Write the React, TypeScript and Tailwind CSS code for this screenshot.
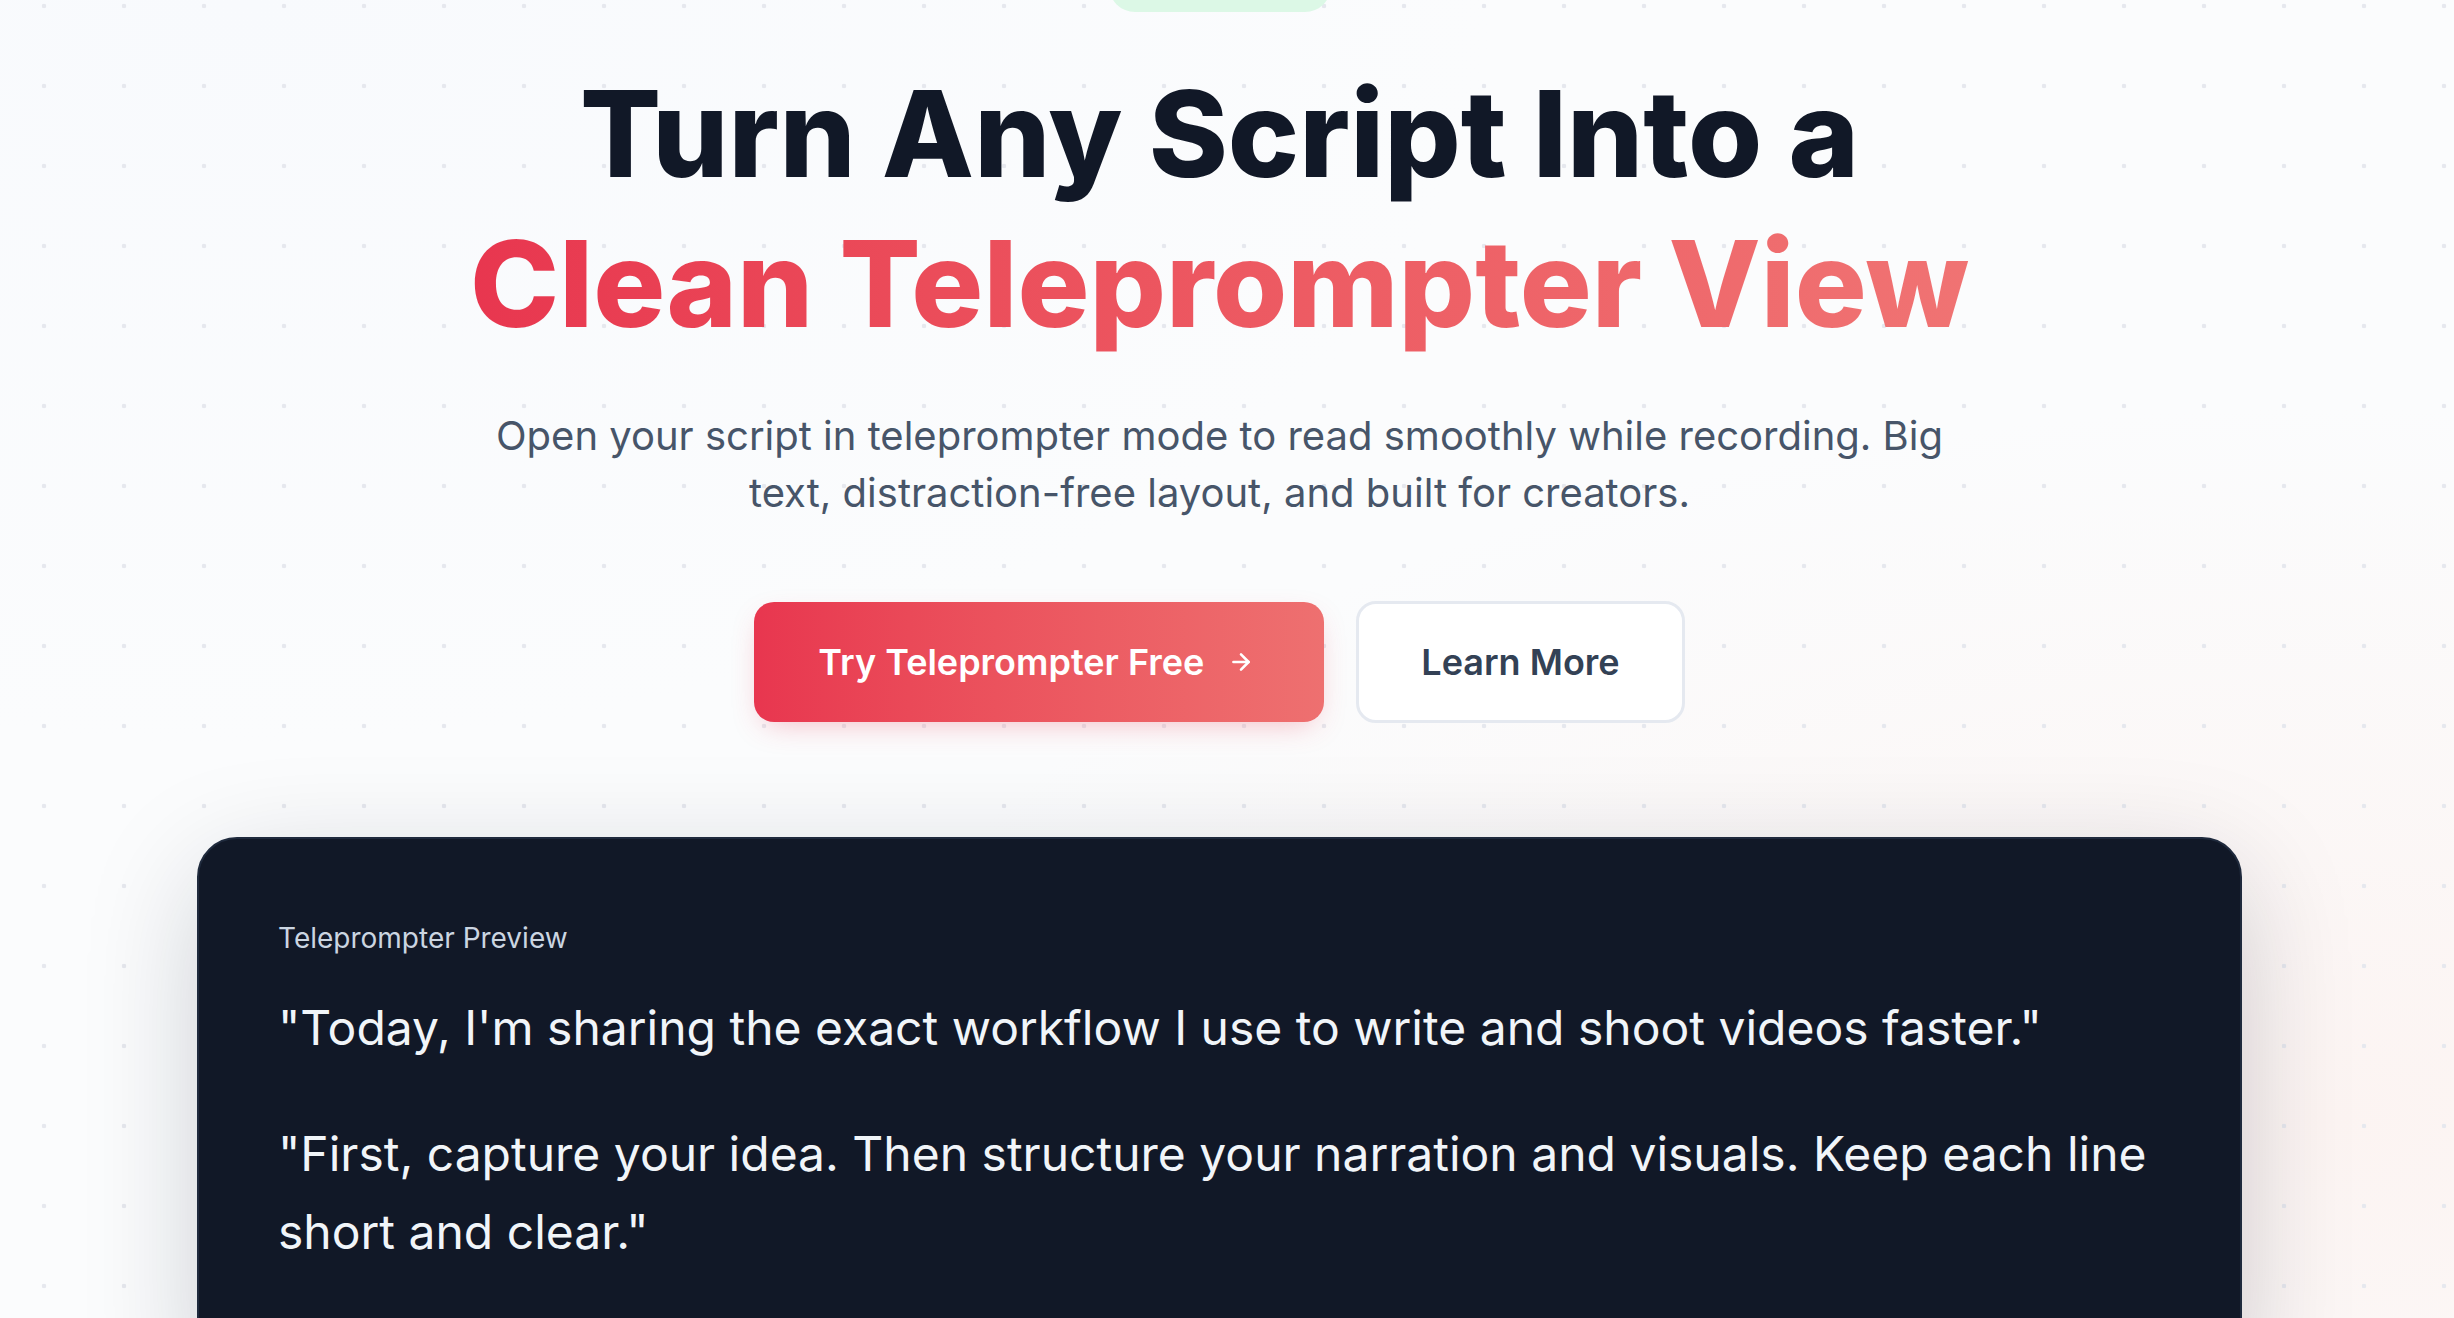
import React from "react";

function ArrowRight() {
  return (
    <svg width="26" height="26" viewBox="0 0 24 24" fill="none" stroke="currentColor" strokeWidth="2.4" strokeLinecap="round" strokeLinejoin="round">
      <path d="M5 12h14" />
      <path d="m12 5 7 7-7 7" />
    </svg>
  );
}

export default function App() {
  return (
    <div
      className="relative h-[1318px] w-full overflow-hidden bg-[#fbfcfd]"
      style={{ fontFamily: "Inter, 'Noto Sans', sans-serif" }}
    >
      <div className="pointer-events-none absolute inset-0 bg-[radial-gradient(ellipse_at_95%_85%,#fcf4f2_0%,transparent_45%),radial-gradient(ellipse_at_10%_0%,#f8fafd_0%,transparent_40%)]" />
      <div className="pointer-events-none absolute inset-0 bg-[radial-gradient(circle,#e6e8ee_2px,transparent_2.6px)] bg-[size:80px_80px] bg-[position:4px_46px]" />
      <div className="relative flex flex-col items-center pr-[15px]">
        <div className="mt-[-40px] h-[52px] w-[222px] rounded-full bg-[#dcf8e6]" />
        <h1 className="mt-[47px] text-center text-[120px] font-extrabold leading-[150px] tracking-normal text-[#111827]">
          <span className="block">Turn Any Script Into a</span>
          <span className="block bg-gradient-to-r from-[#e8364f] to-[#f07373] bg-clip-text text-transparent">
            Clean Teleprompter View
          </span>
        </h1>
        <p className="mt-[48px] max-w-[1490px] text-center text-[40px] leading-[57px] text-[#475569]">
          Open your script in teleprompter mode to read smoothly while recording. Big text, distraction-free layout, and built for creators.
        </p>
        <div className="mt-[80px] flex items-center gap-[32px]">
          <button className="flex h-[120px] items-center gap-[24px] rounded-[20px] bg-gradient-to-r from-[#e8364f] to-[#ee7070] pl-[64px] pr-[70px] text-[36px] font-semibold text-white shadow-[0_10px_30px_-10px_rgba(232,54,79,0.35)]">
            <span>Try Teleprompter Free</span>
            <ArrowRight />
          </button>
          <button className="flex h-[122px] items-center rounded-[20px] border-[3px] border-[#e5e9f0] bg-white px-[62px] text-[36px] font-semibold text-[#334155]">
            Learn More
          </button>
        </div>
        <div className="mt-[114px] w-[2045px] rounded-[40px] border-2 border-[#1f2a3d] bg-[#111827] px-[79px] pb-[120px] pt-[78px] shadow-[0_30px_120px_-10px_rgba(15,23,42,0.22)]">
          <div className="text-[28px] leading-[42px] text-[#cbd5e1]">Teleprompter Preview</div>
          <div className="mt-[30px] flex flex-col gap-[48px] text-[48px] leading-[78px] text-[#f1f5f9]">
            <p>"Today, I'm sharing the exact workflow I use to write and shoot videos faster."</p>
            <p>"First, capture your idea. Then structure your narration and visuals. Keep each line short and clear."</p>
          </div>
        </div>
      </div>
    </div>
  );
}
